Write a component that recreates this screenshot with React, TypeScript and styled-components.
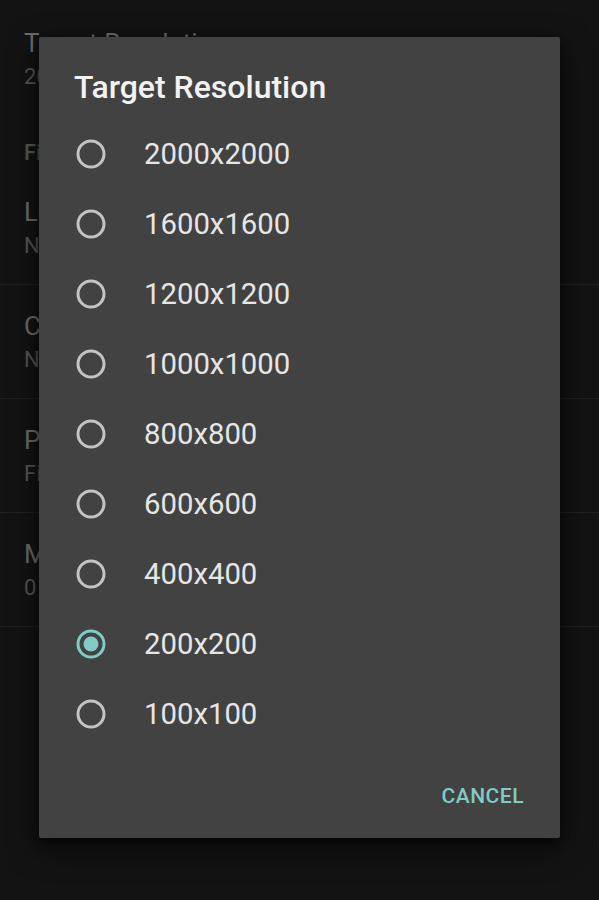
import React from "react";
import styled, { createGlobalStyle } from "styled-components";

const Global = createGlobalStyle`
  html, body { margin: 0; padding: 0; background: #131313; }
  body { font-family: Roboto, "Noto Sans", sans-serif; overflow: hidden; }
`;

const Page = styled.div`
  width: 599px;
  height: 900px;
  background: #131313;
  position: relative;
`;

const SettingsList = styled.div`
  display: flex;
  flex-direction: column;
  padding-top: 28px;
`;

const SettingRow = styled.div<{ $divider?: boolean }>`
  display: flex;
  flex-direction: column;
  gap: 6px;
  padding: 0 24px;
  height: ${(p) => (p.$divider ? "114px" : "auto")};
  box-sizing: border-box;
  justify-content: center;
  border-bottom: ${(p) => (p.$divider ? "1.5px solid #1f1f1f" : "none")};
`;

const SettingTitle = styled.div`
  font-size: 26px;
  color: #6c6c6c;
  line-height: 30px;
`;

const SettingSub = styled.div`
  font-size: 22px;
  color: #555;
  line-height: 26px;
`;

const SectionHeader = styled.div`
  font-size: 22px;
  color: #4f5a58;
  font-weight: 500;
  padding: 50px 24px 5px;
  line-height: 26px;
`;

const Dialog = styled.div`
  position: absolute;
  left: 39px;
  top: 37px;
  width: 521px;
  height: 801px;
  background: #424242;
  border-radius: 2px;
  box-shadow: 0 10px 30px rgba(0, 0, 0, 0.6), 0 4px 10px rgba(0, 0, 0, 0.4);
  display: flex;
  flex-direction: column;
  box-sizing: border-box;
`;

const Title = styled.div`
  font-size: 32px;
  font-weight: 500;
  color: #f2f2f2;
  padding: 32px 35px 0;
  line-height: 36px;
  height: 82px;
  box-sizing: border-box;
`;

const Options = styled.div`
  display: flex;
  flex-direction: column;
`;

const Option = styled.div`
  display: flex;
  align-items: center;
  height: 70px;
  padding-left: 37px;
`;

const RadioWrap = styled.div`
  width: 30px;
  height: 30px;
  margin-right: 38px;
  display: flex;
`;

const Label = styled.div`
  font-size: 29.3px;
  color: #e6e6e6;
`;

const Actions = styled.div`
  margin-top: auto;
  display: flex;
  justify-content: flex-end;
  padding: 0 36px 30px;
`;

const Button = styled.button`
  background: none;
  border: none;
  padding: 0;
  font-family: Roboto, sans-serif;
  font-weight: 500;
  font-size: 21px;
  letter-spacing: 0.5px;
  color: #80cbc4;
  text-transform: uppercase;
`;

const Radio = ({ checked }: { checked: boolean }) => (
  <svg width="30" height="30" viewBox="0 0 30 30">
    <circle
      cx="15"
      cy="15"
      r="13"
      fill="none"
      stroke={checked ? "#80cbc4" : "#c4c4c4"}
      strokeWidth="3"
    />
    {checked && <circle cx="15" cy="15" r="7.5" fill="#80cbc4" />}
  </svg>
);

const options = [
  "2000x2000",
  "1600x1600",
  "1200x1200",
  "1000x1000",
  "800x800",
  "600x600",
  "400x400",
  "200x200",
  "100x100",
];

export default function App() {
  return (
    <Page>
      <Global />
      <SettingsList>
        <SettingRow>
          <SettingTitle>Target Resolution</SettingTitle>
          <SettingSub>200x200</SettingSub>
        </SettingRow>
        <SectionHeader>File</SectionHeader>
        <SettingRow $divider>
          <SettingTitle>Location</SettingTitle>
          <SettingSub>Not set</SettingSub>
        </SettingRow>
        <SettingRow $divider>
          <SettingTitle>Compression</SettingTitle>
          <SettingSub>None</SettingSub>
        </SettingRow>
        <SettingRow $divider>
          <SettingTitle>Prefix</SettingTitle>
          <SettingSub>File</SettingSub>
        </SettingRow>
        <SettingRow $divider>
          <SettingTitle>Minimum size</SettingTitle>
          <SettingSub>0 KB</SettingSub>
        </SettingRow>
      </SettingsList>
      <Dialog>
        <Title>Target Resolution</Title>
        <Options>
          {options.map((o) => (
            <Option key={o}>
              <RadioWrap>
                <Radio checked={o === "200x200"} />
              </RadioWrap>
              <Label>{o}</Label>
            </Option>
          ))}
        </Options>
        <Actions>
          <Button>Cancel</Button>
        </Actions>
      </Dialog>
    </Page>
  );
}
